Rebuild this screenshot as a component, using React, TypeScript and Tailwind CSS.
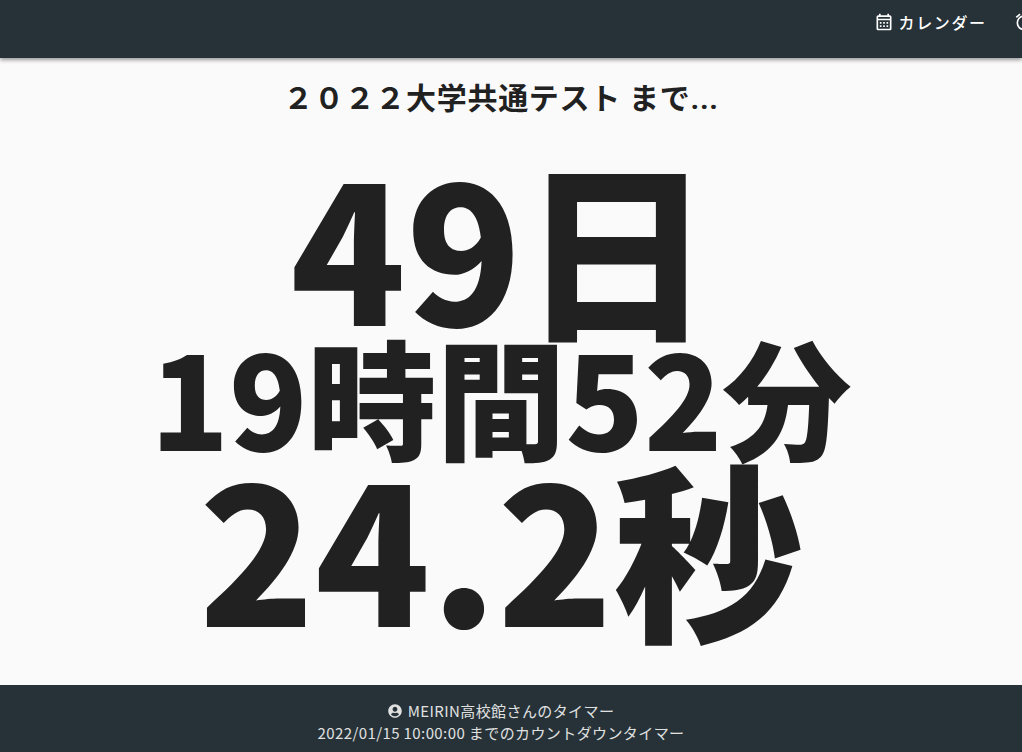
import { MdOutlineCalendarMonth, MdOutlineAlarm } from "react-icons/md";
import { FaUserCircle } from "react-icons/fa";

const jp = "font-['Noto_Sans_CJK_JP','Noto_Sans',sans-serif]";

export default function App() {
  return (
    <div className={`h-[752px] w-[1022px] overflow-hidden flex flex-col bg-[#fafafa] ${jp}`}>
      <header className="h-[58px] shrink-0 bg-[#263238] shadow-[0_2px_4px_rgba(0,0,0,0.4)] z-10 flex justify-end text-white overflow-hidden">
        <div className="flex items-start pt-[11px] gap-[27px] -mr-[87px]">
          <div className="flex items-center gap-[5px] text-[16px] font-medium tracking-[1.6px] leading-[22px]">
            <MdOutlineCalendarMonth size={20} />
            <span>カレンダー</span>
          </div>
          <div className="flex items-center gap-[5px] text-[16px] font-medium tracking-[1.6px] leading-[22px]">
            <MdOutlineAlarm size={20} />
            <span>タイマー</span>
          </div>
        </div>
      </header>
      <main className="flex-1 flex flex-col items-center text-[#212121] overflow-hidden pr-[20px]">
        <div className="mt-[19px] text-[30px] leading-[44px] font-bold tracking-[0.7px] font-['Roboto','Noto_Sans_CJK_JP',sans-serif]">２０２２大学共通テスト まで...</div>
        <div className="mt-[28px] text-[190px] leading-[190px] font-black">49日</div>
        <div className="text-[129px] leading-[129px] font-black -mt-[9px]">19時間52分</div>
        <div className="text-[190px] leading-[190px] font-black -mt-[9px]">24.2秒</div>
      </main>
      <footer className="h-[67px] shrink-0 bg-[#263238] text-[#e0e0e0] text-[15px] leading-[22px] tracking-[0.4px] flex flex-col items-center justify-center pr-[20px] pt-[6px]">
        <div className="flex items-center gap-[6px]"><FaUserCircle size={14} /><span>MEIRIN高校館さんのタイマー</span></div>
        <div>2022/01/15 10:00:00 までのカウントダウンタイマー</div>
      </footer>
    </div>
  );
}
